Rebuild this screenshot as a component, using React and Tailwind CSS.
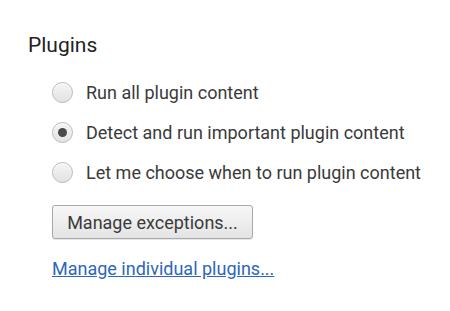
export default function App() {
  const options = [
    { label: "Run all plugin content", checked: false },
    { label: "Detect and run important plugin content", checked: true },
    { label: "Let me choose when to run plugin content", checked: false },
  ];

  return (
    <div className="w-[450px] h-[311px] bg-white font-['Roboto',sans-serif] text-[#333]">
      <div className="pl-[28px] pt-[32px]">
        <h2 className="text-[21px] leading-[26px] text-[#222]">Plugins</h2>
        <div className="pl-[24px] pt-[24px]">
          <div className="flex flex-col gap-[19px]">
            {options.map((o) => (
              <label key={o.label} className="flex items-center gap-[13px] h-[21px]">
                <span className="w-[21px] h-[21px] rounded-full border border-[#b9b9b9] bg-gradient-to-b from-[#f6f6f6] to-[#e2e2e2] flex items-center justify-center shadow-[inset_0_1px_1px_rgba(255,255,255,0.8)]">
                  {o.checked && <span className="w-[9px] h-[9px] rounded-full bg-[#4a4a4a]" />}
                </span>
                <span className="text-[18px] leading-[21px] text-[#3a3a3a]">{o.label}</span>
              </label>
            ))}
          </div>
          <button className="mt-[22px] w-[201px] h-[34px] rounded-[3px] border border-[#a9a9a9] bg-gradient-to-b from-[#f7f7f7] to-[#e4e4e4] text-[18px] text-[#3a3a3a] shadow-[0_1px_1px_rgba(0,0,0,0.1)]">
            Manage exceptions...
          </button>
          <div className="mt-[19px]">
            <a className="text-[18px] leading-[21px] text-[#2c66bd] underline">Manage individual plugins...</a>
          </div>
        </div>
      </div>
    </div>
  );
}
